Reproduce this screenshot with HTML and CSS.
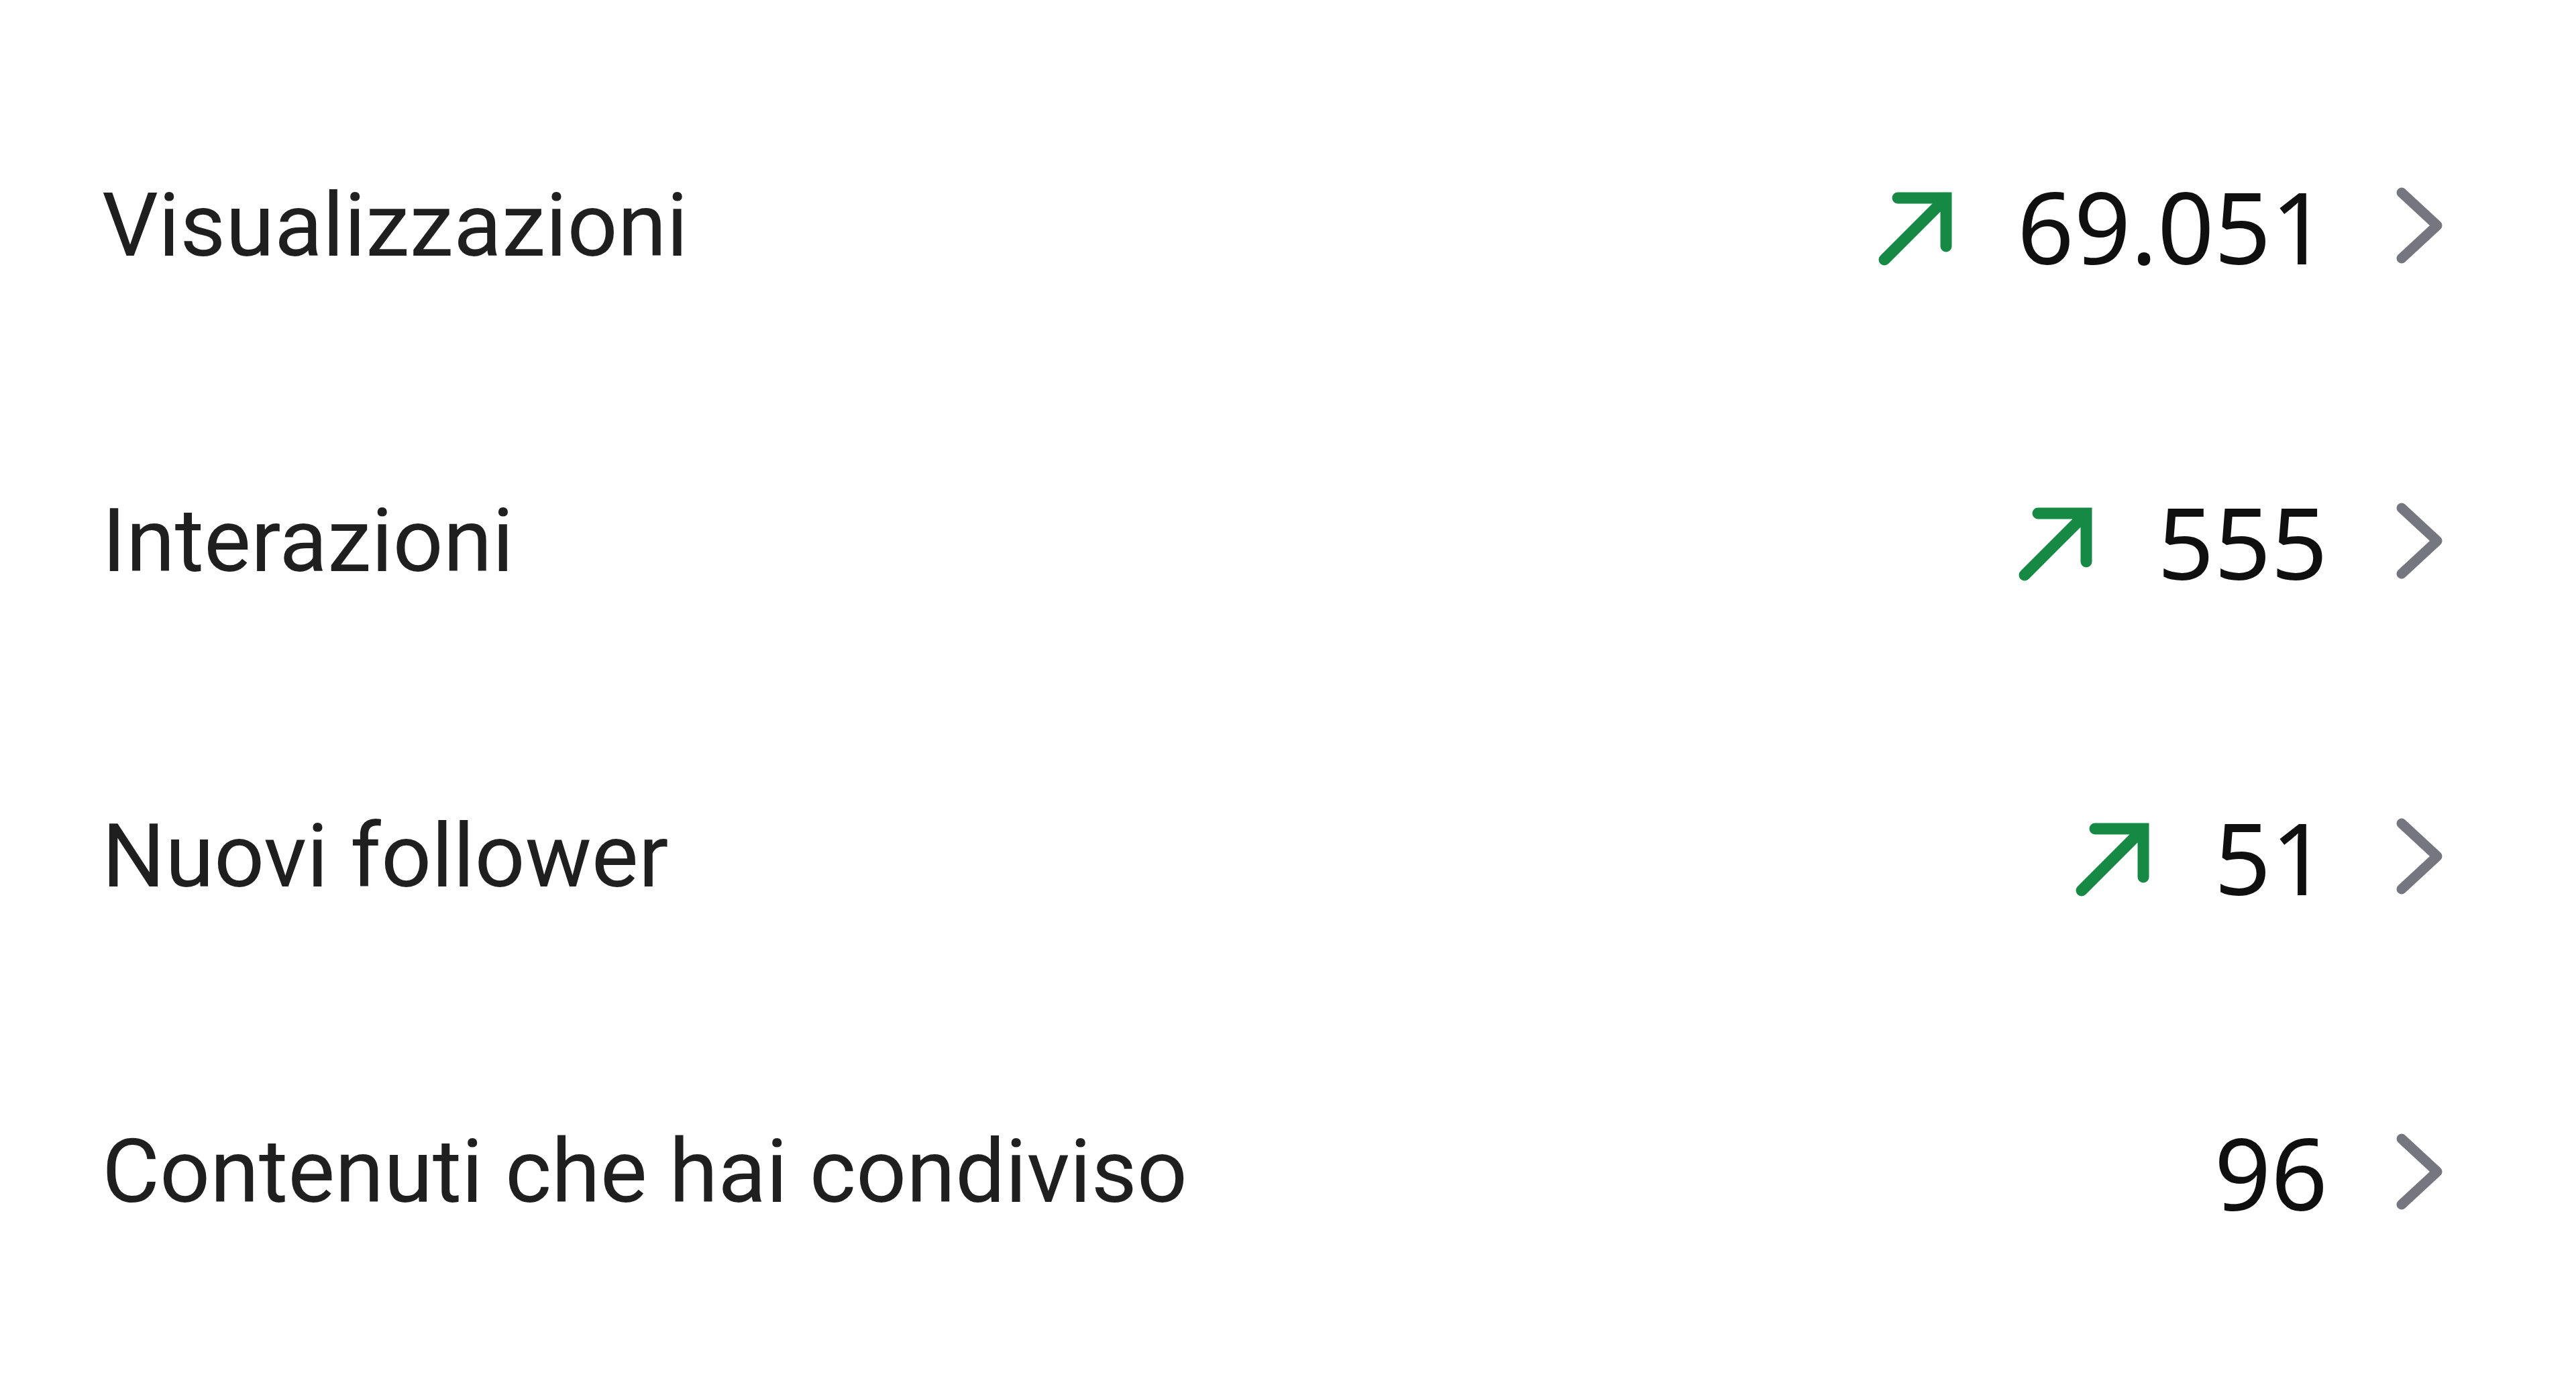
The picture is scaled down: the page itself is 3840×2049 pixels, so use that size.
FILE: index.html
```html
<!DOCTYPE html>
<html lang="it">
<head>
    <meta charset="UTF-8">
    <meta name="viewport" content="width=device-width, initial-scale=1.0">
    <title>Statistiche</title>
    <link rel="stylesheet" href="styles.css">
</head>
<body>
    <!-- riepilogo statistiche -->
    <div class="stats">
        <div class="stat-row">
            <span class="stat-label">Visualizzazioni</span>
            <div class="stat-value">
                <svg class="trend" viewBox="0 0 110 110"><path d="M9 101 L101 9 M29 9 H101 V81"/></svg>
                <span class="stat-number">69.051</span>
                <svg class="chevron" viewBox="0 0 70 114"><path d="M8 8 L61 57 L8 106"/></svg>
            </div>
        </div>
        <div class="stat-row">
            <span class="stat-label">Interazioni</span>
            <div class="stat-value">
                <svg class="trend" viewBox="0 0 110 110"><path d="M9 101 L101 9 M29 9 H101 V81"/></svg>
                <span class="stat-number">555</span>
                <svg class="chevron" viewBox="0 0 70 114"><path d="M8 8 L61 57 L8 106"/></svg>
            </div>
        </div>
        <div class="stat-row">
            <span class="stat-label">Nuovi follower</span>
            <div class="stat-value">
                <svg class="trend" viewBox="0 0 110 110"><path d="M9 101 L101 9 M29 9 H101 V81"/></svg>
                <span class="stat-number">51</span>
                <svg class="chevron" viewBox="0 0 70 114"><path d="M8 8 L61 57 L8 106"/></svg>
            </div>
        </div>
        <div class="stat-row">
            <span class="stat-label">Contenuti che hai condiviso</span>
            <div class="stat-value">
                <span class="stat-number">96</span>
                <svg class="chevron" viewBox="0 0 70 114"><path d="M8 8 L61 57 L8 106"/></svg>
            </div>
        </div>
    </div>
</body>
</html>
```

FILE: styles.css
```css
body {
    margin: 0;
    background-color: #ffffff;
    font-family: Roboto, "Noto Sans", sans-serif;
}

.stats {
    padding: 101px 198px 0 152px;
}

.stat-row {
    height: 470px;
    display: flex;
    align-items: center;
    justify-content: space-between;
}

.stat-label {
    font-size: 132px;
    color: #1f1f1f;
}

.stat-value {
    display: flex;
    align-items: center;
}

.stat-number {
    font-family: "Noto Sans", Roboto, sans-serif;
    font-size: 148px;
    color: #0f0f0f;
}

.trend {
    width: 110px;
    height: 110px;
    margin-top: 10px;
    margin-right: 97px;
    fill: none;
    stroke: #168a45;
    stroke-width: 17;
    stroke-linecap: round;
    stroke-linejoin: miter;
}

.chevron {
    width: 70px;
    height: 114px;
    margin-left: 102px;
    fill: none;
    stroke: #74777f;
    stroke-width: 15;
    stroke-linecap: round;
    stroke-linejoin: round;
}
```
